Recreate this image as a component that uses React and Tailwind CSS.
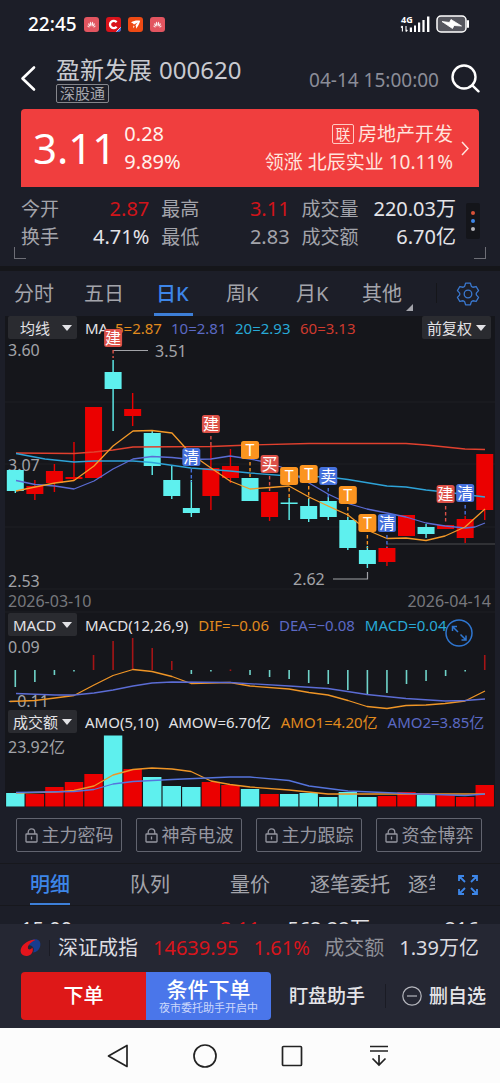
import React from "react";

const UP = "#eb0000";
const DOWN = "#5ef0ee";
const cx = (i) => 15.3 + 19.56 * i;

// [rising, high, bodyTop, bodyBottom, low]
const candles = [
  [0, 470, 470, 491, 493], [1, 480, 486, 494, 500], [1, 464, 471, 483, 492],
  [1, 442, 477, 479, 481], [1, 407, 407, 478, 478], [0, 360, 372, 389, 431],
  [1, 393, 409, 416, 426], [0, 430, 433, 466, 475], [0, 466, 480, 496, 499],
  [0, 480, 508, 513, 517], [1, 445, 468, 496, 510], [1, 449, 466, 478, 483],
  [0, 478, 478, 501, 501], [1, 492, 492, 517, 521], [0, 498, 502.5, 504, 520],
  [0, 498, 506, 519, 522], [0, 497, 501, 517, 520], [0, 517, 520, 548, 550],
  [0, 546, 550, 564, 568], [1, 546, 548, 562, 566], [1, 515, 515, 536, 536],
  [0, 524, 527, 534, 538], [1, 525, 525, 529, 529], [1, 516, 519, 538, 543],
  [1, 454, 454, 510, 520],
];

// [index, label, centre, dash end]
const marks = [
  [5, "建", 338, 358], [9, "清", 457, 482], [10, "建", 424, 446],
  [12, "T", 450, 477], [13, "买", 464, 491], [14, "T", 476, 499],
  [15, "T", 474, 499], [16, "卖", 476, 499], [17, "T", 495, 518],
  [18, "T", 523, 548], [19, "清", 523, 548], [22, "建", 494, 524],
  [23, "清", 493, 517],
];
const markColor = { 建: "#dc5148", 买: "#dc5148", T: "#fb9420", 清: "#4570dc", 卖: "#4570dc" };

const macd = [
  [0, 687], [0, 682], [0, 675], [0, 671], [1, 655], [1, 641], [1, 638], [1, 648],
  [1, 661], [0, 674], [0, 671.5], [1, 669.5], [0, 675], [0, 677], [0, 679], [0, 683],
  [0, 684], [0, 690], [0, 695], [0, 693], [0, 684], [0, 681], [0, 676], [0, 671], [1, 655],
];

const volume = [
  [0, 792], [1, 793], [1, 786], [1, 781], [1, 773], [0, 734.5], [1, 768], [0, 776],
  [0, 785], [0, 786], [1, 781], [1, 784], [0, 788], [1, 793], [0, 793], [0, 792],
  [0, 796], [0, 791], [0, 796], [1, 795], [1, 791], [0, 794], [1, 794], [1, 796], [1, 784],
];

function Line({ points, color }) {
  return <polyline points={points} fill="none" stroke={color} strokeWidth="1.3" strokeLinejoin="round" />;
}

function Label({ x, y, children, anchor = "start", fill = "#a2a3a8" }) {
  return (
    <text x={x} y={y} fontSize="16" fill={fill} textAnchor={anchor}>
      {children}
    </text>
  );
}

function PriceChart() {
  return (
    <svg viewBox="5 340 490 273" className="relative block w-full overflow-visible" role="img" aria-label="日K">
      <path d="M5 402H495M5 464H495M5 527H495M5 589H495M5 612H495" stroke="#1e1f24" strokeWidth="1" />
      <path d="M387 544H495" stroke="#3a3b3f" strokeWidth="1.5" />
      <Label x={8} y={356}>3.60</Label>
      <Label x={8} y={471}>3.07</Label>
      <Label x={8} y={587}>2.53</Label>
      {candles.map(([up, h, t, b, l], i) => (
        <g key={i} fill={up ? UP : DOWN}>
          <rect x={cx(i) - 0.7} y={h} width="1.4" height={l - h} />
          <rect x={cx(i) - 8.5} y={t} width="17" height={b - t} />
        </g>
      ))}
      <Line color="#e0402e" points="16,453 74,453.5 94,452 113,450 133,447 211,446.5 250,445 309,443.5 406,443.5 426,445 465,449 485,449.5" />
      <Line color="#2ea3d8" points="16,453.5 45,459 74,462 94,461 133,461 152,462.5 191,468 230,471 250,473 289,476 328,477 348,479.5 387,486 406,487 426,490 445,492 465,494.5 485,497" />
      <Line color="#5b6cd4" points="16,480.5 35,484.5 55,486 74,489 94,481 113,469 133,459 152,456.5 172,457.5 191,459.5 211,459 230,456 250,459 265,462 281,467 309,483 328,494 348,503.5 367,509 387,513 406,517 426,523 445,526 465,528 475,527 485,523" />
      <Line color="#f59a28" points="16,491 35,487 55,483 74,480.5 94,466 113,446 133,431 152,430.5 172,433 191,454 211,468 230,481 250,489 270,487.5 289,486 309,497 328,506 348,515 367,530 387,538.5 406,538 426,540.5 445,536 465,527 485,509" />
      <path d="M113 350.5H148" stroke="#a2a3a8" strokeWidth="1.2" />
      <path d="M333 579H367.5V572" fill="none" stroke="#a2a3a8" strokeWidth="1.2" />
      <Label x={155} y={357}>3.51</Label>
      <Label x={293} y={585}>2.62</Label>
      {marks.map(([i, s, y, end]) => (
        <g key={i}>
          <path d={`M${cx(i)} ${y + 12}V${end}`} stroke={markColor[s]} strokeWidth="1.4" strokeDasharray="3.5 2.5" />
          <rect x={cx(i) - 9} y={y - 9} width="18" height="18" rx="2.5" fill={markColor[s]} />
          <text x={cx(i)} y={y + 5.8} fontSize="16" fill="#fff" textAnchor="middle">{s}</text>
        </g>
      ))}
      <Label x={8} y={607} fill="#77787d">2026-03-10</Label>
      <Label x={491} y={607} anchor="end" fill="#77787d">2026-04-14</Label>
    </svg>
  );
}

function MacdChart() {
  return (
    <svg viewBox="5 637 490 73" className="block w-full overflow-visible" role="img" aria-label="MACD">
      <Label x={8} y={653}>0.09</Label>
      <Label x={8} y={707}>−0.11</Label>
      {macd.map(([up, y], i) => (
        <rect key={i} x={cx(i) - 0.8} y={Math.min(y, 670)} width="1.6" height={Math.max(Math.abs(y - 670), 1.5)} fill={up ? "#a51416" : "#6fd3c9"} />
      ))}
      <Line color="#ef9526" points="10,701.5 35,700.5 55,698 74,695.5 94,685 113,675.5 133,669.5 152,671.5 172,676.5 191,683.5 230,682.5 250,686 289,689 309,692.5 328,695 348,700.5 367,706.5 387,708.5 406,705.5 426,705 445,703.5 465,701 485,691" />
      <Line color="#5b6cd4" points="16,693.5 55,695 74,695 94,693 113,690 133,686 152,683 172,682 230,682.5 289,686 328,688.5 367,694.5 406,698.5 445,701 465,700.5 485,699" />
    </svg>
  );
}

function VolumeChart() {
  return (
    <svg viewBox="5 733 490 73" className="block w-full overflow-visible" role="img" aria-label="成交额">
      <Label x={8} y={752}>23.92亿</Label>
      {volume.map(([up, y], i) => (
        <rect key={i} x={cx(i) - 9.2} y={y} width="18.4" height={805.5 - y} fill={up ? UP : DOWN} />
      ))}
      <Line color="#ef9526" points="16,792 55,791 74,789.5 94,785 113,774 133,768.5 152,767 172,768 191,770.5 211,780 230,783.5 250,786 289,789 328,793 485,793" />
      <Line color="#5574dd" points="16,791.5 74,790.5 94,788.5 113,783 133,780.5 172,778.5 230,776 250,776 289,779.5 309,785 348,790 406,792.5 465,794.5 485,793" />
    </svg>
  );
}

function Picker({ label, value, className }) {
  return (
    <div className={`relative h-[23px] shrink-0 rounded-xs bg-[#2a2b30] ${className}`}>
      <select aria-label={label} defaultValue={value} className="h-full w-full appearance-none bg-transparent px-[5px] text-[15px] leading-[22px] text-[#e2e2e6] outline-none">
        <option>{value}</option>
      </select>
      <svg viewBox="0 0 10 6" className="pointer-events-none absolute top-[9px] right-[5px] w-[10px]">
        <path d="M0 0H10L5 6Z" fill="#e2e2e6" />
      </svg>
    </div>
  );
}

function Stat({ label, value, color }) {
  return (
    <div className="flex items-center justify-between">
      <dt className="text-[19px] text-[#a3a4ab]">{label}</dt>
      <dd className={`text-xl ${color}`}>{value}</dd>
    </div>
  );
}

function Petals() {
  return (
    <svg viewBox="0 0 15 15" className="w-[15px]">
      <rect width="15" height="15" rx="3" fill="#e25560" />
      <g fill="#fff" opacity="0.9">
        <path d="M7.1 9.6C5.4 8 5.2 6 6.6 4.6 7.4 5.8 7.5 7.6 7.1 9.6ZM7.9 9.6C9.6 8 9.8 6 8.4 4.6 7.6 5.8 7.5 7.6 7.9 9.6Z" />
        <path d="M6.4 9.8C4.5 9.2 3.9 7.6 4.5 5.9 5.6 6.8 6.2 8.2 6.4 9.8ZM8.6 9.8C10.5 9.2 11.1 7.6 10.5 5.9 9.4 6.8 8.8 8.2 8.6 9.8Z" />
        <path d="M5.8 10.4C4.3 10.5 3.4 9.7 3.3 8.5 4.4 8.8 5.2 9.5 5.8 10.4ZM9.2 10.4C10.7 10.5 11.6 9.7 11.7 8.5 10.6 8.8 9.8 9.5 9.2 10.4Z" />
      </g>
    </svg>
  );
}

function StatusBar() {
  return (
    <div className="flex h-12 items-center justify-between pr-[30px] pl-7">
      <div className="flex items-center gap-[7px]">
        <span className="text-[19px] font-medium text-white">22:45</span>
        <Petals />
        <svg viewBox="0 0 15 15" className="w-[15px]">
          <rect width="15" height="15" rx="3" fill="#d9131b" />
          <path d="M10.6 5.2A3.7 3.7 0 1 0 10.6 9.8" fill="none" stroke="#fff" strokeWidth="2.3" />
          <path d="M15 10V12A3 3 0 0 1 12 15H10Z" fill="#3b6fd8" />
          <path d="M10.4 14.6L14.6 10.4" stroke="#fff" strokeWidth="0.8" />
        </svg>
        <svg viewBox="0 0 15 15" className="w-[15px]">
          <rect width="15" height="15" rx="3" fill="#ee4a14" />
          <path d="M3 5.6C6 3.6 9 3.2 12.2 3.8C11.4 6.5 10.4 9.4 8 11.8C8.2 10 8 8.9 7.4 8.2L9.8 5.6L6 7.4C5.3 6.6 4.3 6 3 5.6ZM5.2 8.6L6.6 9.4L5.4 11.2Z" fill="#fff" />
        </svg>
        <Petals />
      </div>
      <div className="flex items-center gap-[5px]">
        <svg viewBox="0 0 30 18" className="w-[30px] overflow-visible" fill="#fff">
          <text x="0" y="8" fontSize="9" fontWeight="700">4G</text>
          <path d="M1.4 16.5V11M5 11V16.5M0 12.5L1.4 11M6.4 15L5 16.5" stroke="#fff" strokeWidth="1.1" />
          <path d="M8.8 12.5H11V17H8.8ZM13 10.5H15V17H13ZM17 7.5H19.2V17H17ZM21.4 5H23.6V17H21.4ZM26 1.5H28.4V17H26Z" />
        </svg>
        <svg viewBox="0 0 34 18" className="w-[34px]">
          <rect x="1" y="1" width="29" height="16" rx="4" fill="#55565e" stroke="#fff" strokeWidth="1.5" />
          <path d="M32 6V12" stroke="#fff" strokeWidth="2" strokeLinecap="round" />
          <path d="M6 6.5L13.5 7.5L15 4.5L25.5 11L18 10.5L16.5 13.5Z" fill="#fff" stroke="#fff" strokeWidth="0.8" />
        </svg>
      </div>
    </div>
  );
}

function Header() {
  return (
    <header className="flex h-[61px] items-start pr-5 pl-5">
      <button aria-label="返回" className="mt-[17px] shrink-0">
        <svg viewBox="0 0 16 27" className="w-4" fill="none" stroke="#fff" strokeWidth="2.6" strokeLinecap="round" strokeLinejoin="round">
          <path d="M14 2.5L2.5 13.5L14 24.5" />
        </svg>
      </button>
      <div className="ml-5 flex flex-1 flex-col items-start pt-2">
        <h1 className="flex gap-[7px] text-2xl leading-7 text-[#c9cad0]">
          <span>盈新发展</span>
          <span>000620</span>
        </h1>
        <span className="flex h-[19px] w-[53px] items-center justify-center rounded-xs border border-[#85868c] text-[15px] leading-none text-[#a5a6ad]">深股通</span>
      </div>
      <time className="mt-5 mr-3 text-[19px] leading-6 text-[#8b8d98]">04-14 15:00:00</time>
      <button aria-label="搜索" className="mt-4">
        <svg viewBox="0 0 29 29" className="w-[29px]" fill="none" stroke="#fff" strokeWidth="2.4" strokeLinecap="round">
          <circle cx="13" cy="13" r="11.5" />
          <path d="M21.3 21.3L27.5 27.3" />
        </svg>
      </button>
    </header>
  );
}

function Quote() {
  return (
    <section className="mx-[21px] flex h-[78px] items-center rounded-t bg-[#f03e3e] pr-2.5 pl-3 text-[#fff1ec]">
      <strong className="text-[42px] leading-none font-normal text-white">3.11</strong>
      <div className="ml-2 text-xl leading-7">
        <div>0.28</div>
        <div>9.89%</div>
      </div>
      <div className="ml-auto text-right text-[19px] leading-7 text-[#ffe4dd]">
        <div className="flex items-center justify-end gap-1">
          <span className="flex h-5 w-[22px] items-center justify-center rounded-xs border border-[#ffc9c2] text-[15px] leading-none">联</span>
          房地产开发
        </div>
        <div>领涨 北辰实业 10.11%</div>
      </div>
      <svg viewBox="0 0 8 15" className="ml-2 w-2" fill="none" stroke="#ffe4dd" strokeWidth="1.5">
        <path d="M1 1L7 7.5L1 14" />
      </svg>
    </section>
  );
}

function Stats() {
  return (
    <section className="relative h-[79px] pt-2 pr-5 pl-[21px]">
      <div className="flex">
        <dl className="grid flex-1 grid-cols-[128fr_128fr_154fr] gap-x-3 leading-7">
          <Stat label="今开" value="2.87" color="text-[#d0141a]" />
          <Stat label="最高" value="3.11" color="text-[#d0141a]" />
          <Stat label="成交量" value="220.03万" color="text-[#e4e4e8]" />
          <Stat label="换手" value="4.71%" color="text-[#e4e4e8]" />
          <Stat label="最低" value="2.83" color="text-[#a3a4ab]" />
          <Stat label="成交额" value="6.70亿" color="text-[#e4e4e8]" />
        </dl>
        <button aria-label="更多" className="mt-2 ml-2.5 flex h-9 w-[14px] flex-col items-center justify-center gap-1 rounded-xs bg-[#14151a]">
          <span className="h-1 w-1 rounded-full bg-[#d85238]" />
          <span className="h-1 w-1 rounded-full bg-[#3d86e8]" />
          <span className="h-1 w-1 rounded-full bg-[#b5b5ba]" />
        </button>
      </div>
      <span className="absolute bottom-[7px] left-[14px] h-3 w-3 border-b border-l border-[#6d6e76]" />
      <span className="absolute right-[14px] bottom-[7px] h-3 w-3 border-r border-b border-[#6d6e76]" />
    </section>
  );
}

const gearPoints = Array.from({ length: 6 }, (_, k) => {
  const a = (k * Math.PI) / 3;
  return [[-3.4, -7.6], [-2.4, -10.8], [2.4, -10.8], [3.4, -7.6]]
    .map(([x, y]) => `${12 + x * Math.cos(a) - y * Math.sin(a)},${12 + x * Math.sin(a) + y * Math.cos(a)}`)
    .join(" ");
}).join(" ");

function ChartTabs() {
  return (
    <nav className="box-content flex h-[45px] items-stretch border-t-[5px] border-[#15161a] pl-[14px] text-xl leading-[46px] text-[#a3a4ab]">
      <button className="w-[70px] text-left">分时</button>
      <button className="w-[70px] text-left">五日</button>
      <button className="relative w-[72px] text-left text-[#3d86e8]">
        <span className="pl-0.5 font-medium">日K</span>
        <span className="absolute bottom-0 left-0 h-[3px] w-[39px] bg-[#3d7fd8]" />
      </button>
      <button className="w-[70px] text-left">周K</button>
      <button className="w-[66px] text-left">月K</button>
      <button className="flex w-[52px]">
        其他
        <svg viewBox="0 0 6 6" className="mt-[28px] ml-1 w-[7px]"><path d="M6 0V6H0Z" fill="#a3a4ab" /></svg>
      </button>
      <span className="mt-3 ml-[22px] h-5 w-px bg-[#15161a]" />
      <button aria-label="设置" className="mr-5 ml-auto">
        <svg viewBox="0 0 24 24" className="w-6" fill="none" stroke="#3a78cf" strokeWidth="1.3" strokeLinejoin="round">
          <polygon points={gearPoints} />
          <circle cx="12" cy="12" r="3.8" />
        </svg>
      </button>
    </nav>
  );
}

function Charts() {
  return (
    <section className="mx-[5px] bg-[#15161b]">
      <div className="flex h-6 items-start gap-2 pr-1 pl-[3px] text-[15px] leading-6">
        <Picker label="均线" value="均线" className="w-[69px] pl-[7px]" />
        <div className="flex flex-1 whitespace-nowrap">
          <span className="w-[30px] text-[#e2e2e6]">MA</span>
          <span className="w-[56px] text-[#e08a1e]">5=2.87</span>
          <span className="w-[64px] text-[#5b69c4]">10=2.81</span>
          <span className="w-[65px] text-[#28a9d6]">20=2.93</span>
          <span className="text-[#cf3a2e]">60=3.13</span>
        </div>
        <Picker label="复权" value="前复权" className="w-[69px]" />
      </div>
      <PriceChart />
      <div className="relative flex h-6 items-start gap-2 pl-[3px] text-[15px] leading-6">
        <Picker label="副图指标一" value="MACD" className="w-[69px]" />
        <div className="flex gap-[10px] whitespace-nowrap">
          <span className="text-[#e2e2e6]">MACD(12,26,9)</span>
          <span className="text-[#e08a1e]">DIF=−0.06</span>
          <span className="text-[#5b69c4]">DEA=−0.08</span>
          <span className="text-[#28a9d6]">MACD=0.04</span>
        </div>
        <button aria-label="展开" className="absolute top-1.5 right-[22px]">
          <svg viewBox="0 0 28 28" className="w-7" fill="none" stroke="#2f76d0" strokeWidth="1.5">
            <circle cx="14" cy="14" r="13" />
            <path d="M7.5 12V7.5H12M7.5 7.5L13 13M21 16.5V21H16.5M21 21L15.5 15.5" />
          </svg>
        </button>
      </div>
      <MacdChart />
      <div className="flex h-6 items-start gap-2 pl-[3px] text-[15px] leading-6">
        <Picker label="副图指标二" value="成交额" className="w-[69px]" />
        <div className="flex gap-[10px] whitespace-nowrap">
          <span className="text-[#e2e2e6]">AMO(5,10)</span>
          <span className="text-[#e2e2e6]">AMOW=6.70亿</span>
          <span className="text-[#e08a1e]">AMO1=4.20亿</span>
          <span className="text-[#5b69c4]">AMO2=3.85亿</span>
        </div>
      </div>
      <VolumeChart />
    </section>
  );
}

function LockedTools() {
  return (
    <section className="grid grid-cols-4 gap-[14px] py-[11px] pr-[18px] pl-4">
      {["主力密码", "神奇电波", "主力跟踪", "资金博弈"].map((name) => (
        <button key={name} className="flex h-[34px] items-center justify-center gap-1 rounded-xs border border-[#62646f] text-lg whitespace-nowrap text-[#9596a0]">
          <svg viewBox="0 0 13 15" className="w-[13px] shrink-0" fill="none" stroke="#9596a0" strokeWidth="1.3">
            <rect x="1" y="6" width="11" height="8" rx="0.5" />
            <path d="M3.2 6V4.2A3.3 3.3 0 0 1 9.8 4.2V6M6.5 8.5V11.5" />
          </svg>
          {name}
        </button>
      ))}
    </section>
  );
}

function Details() {
  return (
    <section>
      <nav className="flex h-[43px] border-y border-[#17181d] text-xl leading-[42px] whitespace-nowrap text-[#a3a4ab]">
        <button className="relative w-[100px] font-medium text-[#3d86e8]">
          明细
          <span className="absolute bottom-0 left-[30px] h-0.5 w-10 bg-[#3d7fd8]" />
        </button>
        <button className="w-[100px]">队列</button>
        <button className="w-[100px]">量价</button>
        <button className="w-[100px]">逐笔委托</button>
        <button className="ml-2 w-[27px] overflow-hidden text-left">逐笔成交</button>
        <button aria-label="全屏" className="mr-[22px] ml-auto">
          <svg viewBox="0 0 20 20" className="w-5" fill="none" stroke="#3d86e8" strokeWidth="1.8">
            <path d="M1 6V1H6M1 1L7 7M14 1H19V6M19 1L13 7M1 14V19H6M1 19L7 13M14 19H19V14M19 19L13 13" />
          </svg>
        </button>
      </nav>
      <div className="h-[18px] overflow-hidden pt-[9px]">
        <table className="w-full table-fixed text-xl leading-7 text-[#e2e2e6]">
          <tbody>
            <tr>
              <td className="w-[29%] pl-[21px]">15:00</td>
              <td className="w-[23%] text-right text-[#d8151c]">3.11</td>
              <td className="w-[22%] text-right">562.22万</td>
              <td className="pr-[21px] text-right">216</td>
            </tr>
          </tbody>
        </table>
      </div>
    </section>
  );
}

function BottomBar() {
  return (
    <footer className="bg-[#252733]">
      <div className="flex h-12 items-center pr-[21px] pl-5 text-xl text-[#dcdce1]">
        <svg viewBox="0 0 21 20" className="w-[21px]">
          <path d="M13 1.5C18 0.5 21 3 20.3 7.5C19.7 11.5 16.5 14.5 13 14.5C14.5 12 14 9.5 11.8 8C9.8 6.8 8 7.4 6.5 8.5C7.5 5 10 2.3 13 1.5Z" fill="#173c8f" />
          <path d="M15.5 2C11 0.8 3.5 5 1.2 10C-0.8 15 2.5 18.5 7 18C11.5 17.4 14 13 12.3 9.6C11.5 11.3 9.5 12 8.3 11C6.8 9 9.5 4.5 15.5 2Z" fill="#e3141c" />
        </svg>
        <span className="ml-2 h-4 w-px bg-[#1a1b24]" />
        <span className="ml-2">深证成指</span>
        <span className="ml-[15px] text-[#d8151c]">14639.95</span>
        <span className="ml-[15px] text-[#d8151c]">1.61%</span>
        <span className="ml-auto text-[#8f9098]">成交额</span>
        <span className="ml-[15px]">1.39万亿</span>
      </div>
      <div className="flex h-14 items-start pr-[14px] pl-[21px] text-xl font-medium text-[#e4e4e8]">
        <button className="h-12 w-[125px] rounded-l bg-[#de1818] text-white">下单</button>
        <button className="flex h-12 w-[125px] flex-col items-center justify-center rounded-r bg-[#4a76ea] text-white">
          <span className="text-[21px] leading-6">条件下单</span>
          <span className="text-[11px] leading-[14px] font-normal text-[#ccd8fb]">夜市委托助手开启中</span>
        </button>
        <button className="ml-[18px] h-12 text-[19px]">盯盘助手</button>
        <span className="mt-3 ml-auto h-6 w-px bg-[#1a1b24]" />
        <button className="ml-4 flex h-12 items-center gap-[7px] text-[19px]">
          <svg viewBox="0 0 20 20" className="w-5" fill="none" stroke="#b5b6bd" strokeWidth="1.2">
            <circle cx="10" cy="10" r="9.2" />
            <path d="M5 10H15" />
          </svg>
          删自选
        </button>
      </div>
    </footer>
  );
}

function SystemNav() {
  return (
    <nav className="flex h-[55px] items-center justify-center gap-[63px] bg-[#fcfcfc] pr-[3px]">
      <button aria-label="后退">
        <svg viewBox="0 0 24 24" className="w-6" fill="none" stroke="#222" strokeWidth="1.7" strokeLinejoin="round"><path d="M21 1.5V22.5L2.5 12Z" /></svg>
      </button>
      <button aria-label="主屏幕">
        <svg viewBox="0 0 24 24" className="w-6" fill="none" stroke="#222" strokeWidth="1.7"><circle cx="12" cy="12" r="11" /></svg>
      </button>
      <button aria-label="最近任务">
        <svg viewBox="0 0 24 24" className="w-6" fill="none" stroke="#222" strokeWidth="1.7"><rect x="2.5" y="2.5" width="19" height="19" rx="1" /></svg>
      </button>
      <button aria-label="下拉通知">
        <svg viewBox="0 0 24 24" className="w-6" fill="none" stroke="#222" strokeWidth="1.7"><path d="M3 2.5H21M3 7H21M12 11V21M5.5 14.5L12 21L18.5 14.5" /></svg>
      </button>
    </nav>
  );
}

export default function App() {
  return (
    <main className="bg-[#1c1e28] font-['Noto_Sans','Noto_Sans_CJK_SC',sans-serif] text-white">
      <StatusBar />
      <Header />
      <Quote />
      <Stats />
      <ChartTabs />
      <Charts />
      <LockedTools />
      <Details />
      <BottomBar />
      <SystemNav />
    </main>
  );
}
